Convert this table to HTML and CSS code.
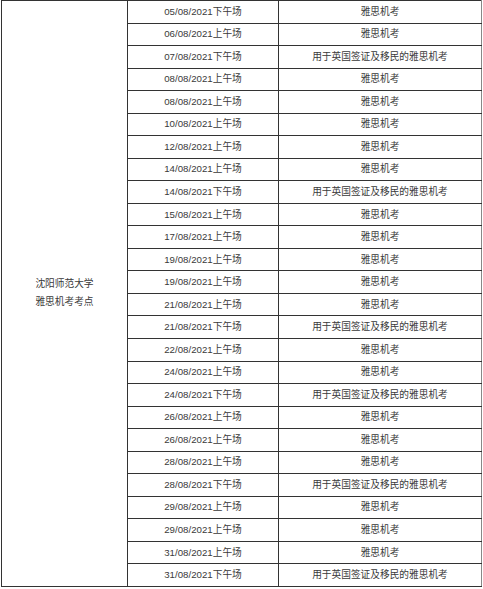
FILE: index.html
```html
<!DOCTYPE html>
<html lang="zh">
<head>
<meta charset="utf-8">
<link rel="stylesheet" href="styles.css">
</head>
<body>
<table class="schedule">
<colgroup><col class="c-site"><col class="c-date"><col class="c-type"></colgroup>
<tbody>
<tr><td class="site" rowspan="26">沈阳师范大学<br>雅思机考考点</td><td>05/08/2021下午场</td><td>雅思机考</td></tr>
<tr><td>06/08/2021上午场</td><td>雅思机考</td></tr>
<tr><td>07/08/2021下午场</td><td>用于英国签证及移民的雅思机考</td></tr>
<tr><td>08/08/2021上午场</td><td>雅思机考</td></tr>
<tr><td>08/08/2021上午场</td><td>雅思机考</td></tr>
<tr><td>10/08/2021上午场</td><td>雅思机考</td></tr>
<tr><td>12/08/2021上午场</td><td>雅思机考</td></tr>
<tr><td>14/08/2021上午场</td><td>雅思机考</td></tr>
<tr><td>14/08/2021下午场</td><td>用于英国签证及移民的雅思机考</td></tr>
<tr><td>15/08/2021上午场</td><td>雅思机考</td></tr>
<tr><td>17/08/2021上午场</td><td>雅思机考</td></tr>
<tr><td>19/08/2021上午场</td><td>雅思机考</td></tr>
<tr><td>19/08/2021上午场</td><td>雅思机考</td></tr>
<tr><td>21/08/2021上午场</td><td>雅思机考</td></tr>
<tr><td>21/08/2021下午场</td><td>用于英国签证及移民的雅思机考</td></tr>
<tr><td>22/08/2021上午场</td><td>雅思机考</td></tr>
<tr><td>24/08/2021上午场</td><td>雅思机考</td></tr>
<tr><td>24/08/2021下午场</td><td>用于英国签证及移民的雅思机考</td></tr>
<tr><td>26/08/2021上午场</td><td>雅思机考</td></tr>
<tr><td>26/08/2021上午场</td><td>雅思机考</td></tr>
<tr><td>28/08/2021上午场</td><td>雅思机考</td></tr>
<tr><td>28/08/2021下午场</td><td>用于英国签证及移民的雅思机考</td></tr>
<tr><td>29/08/2021上午场</td><td>雅思机考</td></tr>
<tr><td>29/08/2021上午场</td><td>雅思机考</td></tr>
<tr><td>31/08/2021上午场</td><td>雅思机考</td></tr>
<tr><td>31/08/2021下午场</td><td>用于英国签证及移民的雅思机考</td></tr>
</tbody>
</table>
</body>
</html>
```
FILE: styles.css
```css
html, body {
  margin: 0;
  padding: 0;
  background: #ffffff;
}
body {
  font-family: "Liberation Sans", "Noto Sans CJK SC", sans-serif;
  font-size: 9.7px;
  color: #3a3a3a;
}
.schedule {
  margin-left: 1px;
  width: 480px;
  border-collapse: collapse;
  table-layout: fixed;
  border-right: 1px solid #888888;
}
.c-site { width: 126px; }
.c-date { width: 151px; }
.c-type { width: 203px; }
.schedule tr {
  height: 22.54px;
}
.schedule td {
  border: 1px solid #333333;
  padding: 0;
  text-align: center;
  vertical-align: middle;
  line-height: 12px;
  white-space: nowrap;
}
.schedule td:last-child {
  border-right-color: #888888;
}
.schedule td.site {
  line-height: 18px;
  border-right-color: #333333;
}
```
